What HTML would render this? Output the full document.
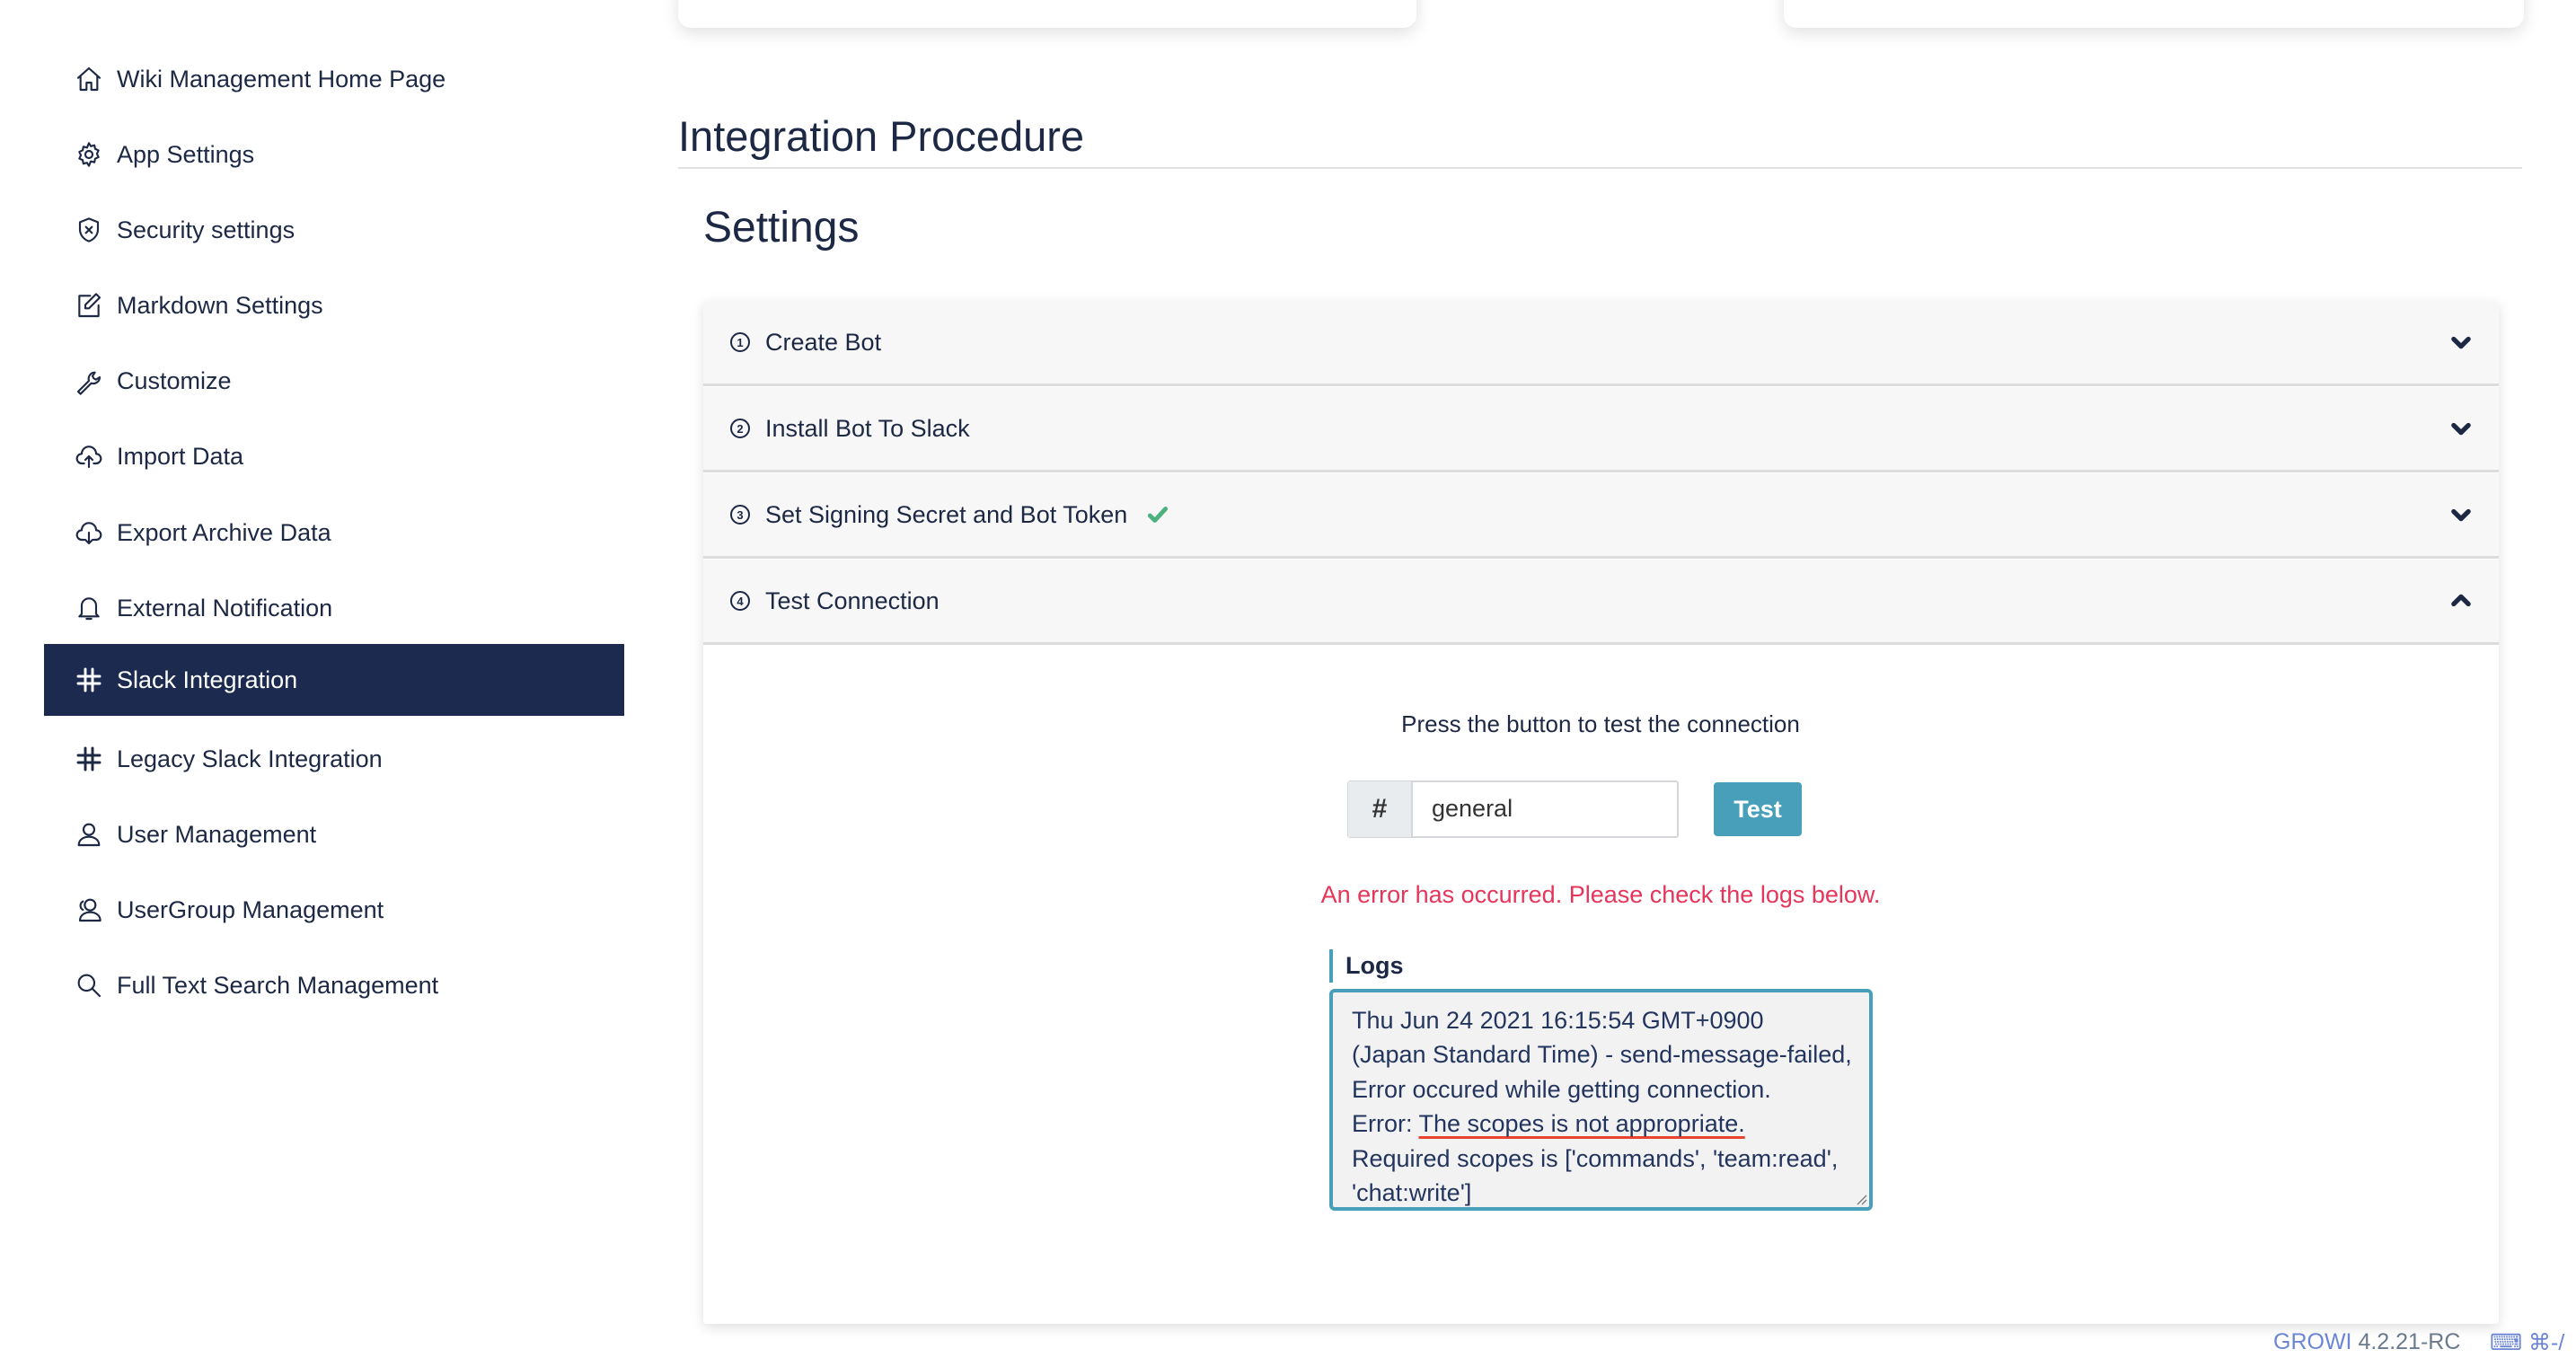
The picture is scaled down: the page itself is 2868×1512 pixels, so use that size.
<!DOCTYPE html>
<html><head><meta charset="utf-8"><style>
*{margin:0;padding:0;box-sizing:border-box}
body{width:2868px;height:1512px;background:#fff;font-family:"Liberation Sans",sans-serif;color:#1c2844;position:relative;overflow:hidden}
.a{position:absolute}
.item{position:absolute;left:49px;width:646px;height:80px;display:flex;align-items:center;font-size:27px;color:#1c2844}
.item svg{position:absolute;left:34px;width:32px;height:32px;fill:none;stroke:#1c2844;stroke-width:1.6;stroke-linecap:round;stroke-linejoin:round}
.item span{position:absolute;left:81px}
.item.act{background:#1b2a4e;color:#fff}
.card{position:absolute;background:#fff;border-radius:14px;box-shadow:0 6px 18px rgba(0,0,0,.12)}
.hdr{position:absolute;left:0;width:1999px;height:95px;background:#f7f7f7;border-bottom:3px solid #dcdcdc;font-size:27px;display:flex;align-items:center}
.hdr .n{position:absolute;left:30px;width:22px;height:22px;border:2.5px solid #1c2844;border-radius:50%;font-size:13px;font-weight:bold;display:flex;align-items:center;justify-content:center}
.hdr .t{position:absolute;left:69px}
.hdr svg{position:absolute;left:1943px;width:28px;height:28px;fill:none;stroke:#1c2844;stroke-width:4.5;stroke-linecap:round;stroke-linejoin:round}
.log{font-size:27px;line-height:38.4px;color:#23355e}
</style></head><body>

<div class="card" style="left:755px;top:-30px;width:822px;height:61px"></div>
<div class="card" style="left:1986px;top:-30px;width:824px;height:61px"></div>

<div class="item" style="top:48px"><svg viewBox="0 0 24 24"><path d="M3 11 12 3l9 8M5 9.5V21h5v-6h4v6h5V9.5"/></svg><span>Wiki Management Home Page</span></div>
<div class="item" style="top:132px"><svg viewBox="0 0 24 24"><circle cx="12" cy="12" r="3"/><path d="M12 2.5l1.6 2.6 3-.8.6 3 2.8 1.3-1.3 2.8 1.3 2.8-2.8 1.3-.6 3-3-.8L12 21.5l-1.6-2.6-3 .8-.6-3-2.8-1.3 1.3-2.8-1.3-2.8 2.8-1.3.6-3 3 .8z"/></svg><span>App Settings</span></div>
<div class="item" style="top:216px"><svg viewBox="0 0 24 24"><path d="M12 2.5 4.5 5.5v6c0 5 3.5 8.5 7.5 10 4-1.5 7.5-5 7.5-10v-6z"/><path d="M9.5 9.5l5 5m0-5-5 5"/></svg><span>Security settings</span></div>
<div class="item" style="top:300px"><svg viewBox="0 0 24 24"><path d="M13 4H4v17h16v-9"/><path d="M18 2.5l3 3-9 9H9v-3z"/></svg><span>Markdown Settings</span></div>
<div class="item" style="top:384px"><svg viewBox="0 0 24 24"><path d="M3 21l9-9c-1-3 1-7 5-7l-2 3 1 2 2 1 3-2c0 4-4 6-7 5l-9 9z"/></svg><span>Customize</span></div>
<div class="item" style="top:468px"><svg viewBox="0 0 24 24"><path d="M8 18H6a4 4 0 0 1 0-8 6 6 0 0 1 12 0 4 4 0 0 1 0 8h-2M12 21v-9m-3 3 3-3 3 3"/></svg><span>Import Data</span></div>
<div class="item" style="top:553px"><svg viewBox="0 0 24 24"><path d="M8 18H6a4 4 0 0 1 0-8 6 6 0 0 1 12 0 4 4 0 0 1 0 8h-2M12 12v9m-3-3 3 3 3-3"/></svg><span>Export Archive Data</span></div>
<div class="item" style="top:637px"><svg viewBox="0 0 24 24"><path d="M6 17V10a6 6 0 0 1 12 0v7l2 2H4zM10 21h4"/></svg><span>External Notification</span></div>
<div class="item act" style="top:717px"><svg viewBox="0 0 24 24" style="stroke:#fff;stroke-width:2.2"><path d="M9 3v18M15 3v18M3 9h18M3 15h18"/></svg><span>Slack Integration</span></div>
<div class="item" style="top:805px"><svg viewBox="0 0 24 24" style="stroke-width:2.2"><path d="M9 3v18M15 3v18M3 9h18M3 15h18"/></svg><span>Legacy Slack Integration</span></div>
<div class="item" style="top:889px"><svg viewBox="0 0 24 24"><circle cx="12" cy="8" r="4.5"/><path d="M3.5 21c0-4.5 4-7 8.5-7s8.5 2.5 8.5 7z"/></svg><span>User Management</span></div>
<div class="item" style="top:973px"><svg viewBox="0 0 24 24"><circle cx="13" cy="8" r="4.5"/><path d="M4.5 21c0-4.5 4-7 8.5-7s8.5 2.5 8.5 7zM7 5a4 4 0 0 0 0 7"/></svg><span>UserGroup Management</span></div>
<div class="item" style="top:1057px"><svg viewBox="0 0 24 24"><circle cx="10" cy="10" r="6.5"/><path d="M15 15l6 6"/></svg><span>Full Text Search Management</span></div>

<div class="a" style="left:755px;top:124px;font-size:47px;color:#1c2844">Integration Procedure</div>
<div class="a" style="left:755px;top:186px;width:2053px;height:2px;background:#dfe1e5"></div>
<div class="a" style="left:783px;top:226px;font-size:48px;color:#1c2844">Settings</div>

<div class="card" style="left:783px;top:335px;width:1999px;height:1139px;border-radius:4px;overflow:hidden;box-shadow:0 4px 14px rgba(0,0,0,.13)">
  <div class="hdr" style="top:0"><div class="n">1</div><div class="t">Create Bot</div><svg viewBox="0 0 24 24"><path d="M5 9l7 7 7-7"/></svg></div>
  <div class="hdr" style="top:96px"><div class="n">2</div><div class="t">Install Bot To Slack</div><svg viewBox="0 0 24 24"><path d="M5 9l7 7 7-7"/></svg></div>
  <div class="hdr" style="top:192px"><div class="n">3</div><div class="t">Set Signing Secret and Bot Token</div><svg viewBox="0 0 24 24" style="left:493px;stroke:#4bb27f;width:26px;height:26px"><path d="M4 13l5 5L20 6"/></svg><svg viewBox="0 0 24 24"><path d="M5 9l7 7 7-7"/></svg></div>
  <div class="hdr" style="top:288px"><div class="n">4</div><div class="t">Test Connection</div><svg viewBox="0 0 24 24"><path d="M5 15l7-7 7 7"/></svg></div>
</div>

<div class="a" style="left:1382px;top:791px;width:800px;text-align:center;font-size:26px;color:#1c2844">Press the button to test the connection</div>

<div class="a" style="left:1500px;top:869px;width:369px;height:64px;border:2px solid #d4d6d9;border-radius:3px;background:#fff"></div>
<div class="a" style="left:1501px;top:870px;width:72px;height:62px;background:#e9ecef;border-right:2px solid #d4d6d9;font-size:30px;font-weight:bold;display:flex;align-items:center;justify-content:center;color:#333">#</div>
<div class="a" style="left:1594px;top:885px;font-size:27px;color:#333">general</div>
<div class="a" style="left:1908px;top:871px;width:98px;height:60px;background:#479fb9;border-radius:4px;color:#fff;font-size:27px;font-weight:bold;display:flex;align-items:center;justify-content:center">Test</div>

<div class="a" style="left:1382px;top:981px;width:800px;text-align:center;font-size:27px;color:#e6355a">An error has occurred. Please check the logs below.</div>

<div class="a" style="left:1480px;top:1057px;width:4px;height:37px;background:#479fb9"></div>
<div class="a" style="left:1498px;top:1060px;font-size:27px;font-weight:bold;color:#1c2844">Logs</div>

<div class="a" style="left:1480px;top:1101px;width:605px;height:247px;border:4px solid #479fb9;border-radius:6px;background:#f2f2f2;padding:12px 0 0 21px;overflow:hidden">
<div class="log">Thu Jun 24 2021 16:15:54 GMT+0900<br>(Japan Standard Time) - send-message-failed,<br>Error occured while getting connection.<br>Error: <span style="text-decoration:underline;text-decoration-color:#e8452c;text-decoration-thickness:3px;text-underline-offset:5px">The scopes is not appropriate.</span><br>Required scopes is ['commands', 'team:read',<br>'chat:write']</div>
<svg class="a" style="right:2px;bottom:2px" width="14" height="14" viewBox="0 0 14 14"><path d="M13 3 3 13M13 8l-5 5" stroke="#777" stroke-width="1.3"/></svg>
</div>

<div class="a" style="left:2531px;top:1480px;font-size:25px;color:#6b7a8f"><span style="color:#6c86d4">GROWI</span> 4.2.21-RC</div>
<div class="a" style="left:2772px;top:1480px;font-size:25px;color:#6c86d4">⌨ ⌘-/</div>
</body></html>
